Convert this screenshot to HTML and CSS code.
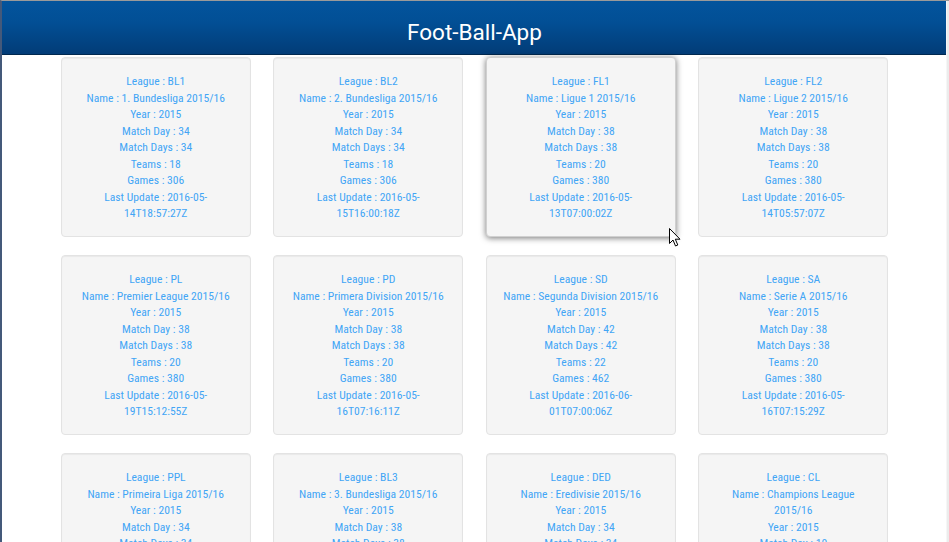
FILE: index.html
```html
<!DOCTYPE html>
<html lang="en">
<head>
<meta charset="utf-8">
<title>Foot-Ball-App</title>
<link rel="stylesheet" href="styles.css">
</head>
<body>
<div class="frame">
  <div class="app">
    <header class="topbar"><h1 class="title">Foot-Ball-App</h1></header>
    <main class="grid">
      <div class="card"><p>League : BL1</p><p>Name : 1. Bundesliga 2015/16</p><p>Year : 2015</p><p>Match Day : 34</p><p>Match Days : 34</p><p>Teams : 18</p><p>Games : 306</p><p>Last Update : 2016-05-14T18:57:27Z</p></div>
      <div class="card"><p>League : BL2</p><p>Name : 2. Bundesliga 2015/16</p><p>Year : 2015</p><p>Match Day : 34</p><p>Match Days : 34</p><p>Teams : 18</p><p>Games : 306</p><p>Last Update : 2016-05-15T16:00:18Z</p></div>
      <div class="card card-hover"><p>League : FL1</p><p>Name : Ligue 1 2015/16</p><p>Year : 2015</p><p>Match Day : 38</p><p>Match Days : 38</p><p>Teams : 20</p><p>Games : 380</p><p>Last Update : 2016-05-13T07:00:02Z</p>
        <svg class="cursor" width="12" height="19" viewBox="0 0 12 19"><path d="M0.5 0.5 L0.5 15.5 L4 12 L6.5 18 L8.8 17 L6.3 11.2 L11 11.2 Z" fill="#fff" stroke="#000" stroke-width="1" stroke-linejoin="round"/></svg>
      </div>
      <div class="card"><p>League : FL2</p><p>Name : Ligue 2 2015/16</p><p>Year : 2015</p><p>Match Day : 38</p><p>Match Days : 38</p><p>Teams : 20</p><p>Games : 380</p><p>Last Update : 2016-05-14T05:57:07Z</p></div>

      <div class="card"><p>League : PL</p><p>Name : Premier League 2015/16</p><p>Year : 2015</p><p>Match Day : 38</p><p>Match Days : 38</p><p>Teams : 20</p><p>Games : 380</p><p>Last Update : 2016-05-19T15:12:55Z</p></div>
      <div class="card"><p>League : PD</p><p>Name : Primera Division 2015/16</p><p>Year : 2015</p><p>Match Day : 38</p><p>Match Days : 38</p><p>Teams : 20</p><p>Games : 380</p><p>Last Update : 2016-05-16T07:16:11Z</p></div>
      <div class="card"><p>League : SD</p><p>Name : Segunda Division 2015/16</p><p>Year : 2015</p><p>Match Day : 42</p><p>Match Days : 42</p><p>Teams : 22</p><p>Games : 462</p><p>Last Update : 2016-06-01T07:00:06Z</p></div>
      <div class="card"><p>League : SA</p><p>Name : Serie A 2015/16</p><p>Year : 2015</p><p>Match Day : 38</p><p>Match Days : 38</p><p>Teams : 20</p><p>Games : 380</p><p>Last Update : 2016-05-16T07:15:29Z</p></div>

      <div class="card"><p>League : PPL</p><p>Name : Primeira Liga 2015/16</p><p>Year : 2015</p><p>Match Day : 34</p><p>Match Days : 34</p><p>Teams : 18</p><p>Games : 306</p><p>Last Update : 2016-05-15T19:40:13Z</p></div>
      <div class="card"><p>League : BL3</p><p>Name : 3. Bundesliga 2015/16</p><p>Year : 2015</p><p>Match Day : 38</p><p>Match Days : 38</p><p>Teams : 20</p><p>Games : 380</p><p>Last Update : 2016-05-14T16:05:18Z</p></div>
      <div class="card"><p>League : DED</p><p>Name : Eredivisie 2015/16</p><p>Year : 2015</p><p>Match Day : 34</p><p>Match Days : 34</p><p>Teams : 18</p><p>Games : 306</p><p>Last Update : 2016-05-13T16:00:12Z</p></div>
      <div class="card"><p>League : CL</p><p>Name : Champions League 2015/16</p><p>Year : 2015</p><p>Match Day : 10</p><p>Match Days : 13</p><p>Teams : 32</p><p>Games : 124</p><p>Last Update : 2016-05-28T21:15:12Z</p></div>
    </main>
  </div>
  <div class="gutter"></div>
</div>
</body>
</html>
```

FILE: styles.css
```css
html, body {
  margin: 0;
  padding: 0;
  height: 100%;
  overflow: hidden;
  background: #ffffff;
}

.frame {
  display: flex;
  height: 100%;
  box-sizing: border-box;
  border-top: 1px solid #9a9a9a;
  border-left: 2px solid #44597a;
}

.app {
  flex: 1;
  min-width: 0;
}

.gutter {
  width: 2px;
  background: #ececec;
  border-left: 1px solid #f6f6f6;
}

.topbar {
  height: 54px;
  box-sizing: border-box;
  background: linear-gradient(to bottom, #03549d 0%, #024f95 40%, #023c77 100%);
  border-bottom: 1px solid #00284f;
  display: flex;
  align-items: center;
  justify-content: center;
  padding-left: 1px;
}

.title {
  margin: 0;
  padding-top: 8px;
  font-family: Roboto, "Liberation Sans", Arial, sans-serif;
  font-weight: 400;
  font-size: 22.5px;
  color: #ffffff;
}

.grid {
  width: 850px;
  margin: 2px auto 0;
  display: grid;
  grid-template-columns: repeat(4, 212.5px);
  row-gap: 18px;
  padding-left: 1px;
}

.card {
  position: relative;
  justify-self: center;
  width: 190px;
  height: 180px;
  box-sizing: border-box;
  padding: 15px 15px;
  background: #f5f5f5;
  border: 1px solid #e3e3e3;
  border-radius: 4px;
  box-shadow: inset 0 1px 1px rgba(0, 0, 0, 0.05);
  text-align: center;
  font-family: "Liberation Sans Narrow", "Roboto Condensed", Roboto, sans-serif;
  font-size: 11.6px;
  line-height: 16.5px;
  color: #42a5f5;
}

.card p {
  margin: 0;
}

.card-hover {
  border-color: #d0d0d0;
  box-shadow: 0 1px 6px rgba(0, 0, 0, 0.55);
}

.cursor {
  position: absolute;
  left: 182px;
  top: 170px;
}
```
